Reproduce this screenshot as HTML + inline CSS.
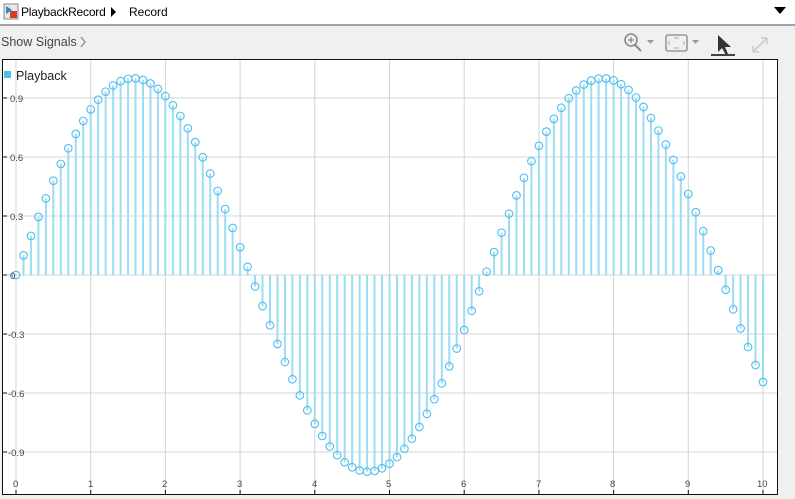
<!DOCTYPE html>
<html><head><meta charset="utf-8"><style>
body{margin:0;width:795px;height:499px;background:#f0f0f0;font-family:"Liberation Sans",sans-serif;position:relative;overflow:hidden}
.top{position:absolute;left:0;top:0;width:795px;height:24px;background:#fff;border-bottom:2px solid #a0a0a8}
.t{position:absolute;font-size:12px;color:#000}
.sv{position:absolute;left:0;top:0}
</style></head><body>
<div class="top"></div>
<svg class="sv" width="795" height="60">
<rect x="4" y="4" width="14" height="15" fill="#e8e8e8" stroke="#888"/>
<path d="M6 6 L12 10 L6 14Z" fill="#3a7fc0"/>
<rect x="10" y="11" width="7" height="7" fill="#d04020"/>
<path d="M111 7 L116 12 L111 17Z" fill="#000"/>
<path d="M774 7 L786 7 L780 14Z" fill="#000"/>
<path d="M81 37 L85 42 L81 47" stroke="#999" stroke-width="1.5" fill="none"/>
<circle cx="631" cy="40" r="6" stroke="#888" stroke-width="1.6" fill="none"/>
<path d="M635 45 L641 51" stroke="#888" stroke-width="2"/>
<path d="M628 40 H634 M631 37 V43" stroke="#888" stroke-width="1.3"/>
<path d="M647 40 H654 L650.5 44Z" fill="#999"/>
<rect x="666" y="35" width="21" height="16" rx="2" stroke="#999" stroke-width="1.6" fill="none"/>
<path d="M674 38 H679 M674 48 H679 M669 41 V45 M684 41 V45" stroke="#aaa" stroke-width="1"/>
<path d="M692 40 H699 L695.5 44Z" fill="#999"/>
<path d="M718 35 L718 52 L722 48 L726 55 L728 54 L725 47 L731 47Z" fill="#333"/>
<rect x="711" y="54" width="24" height="2" fill="#444"/>
<path d="M753 52 L767 38 M753 52 V46 M753 52 H759 M767 38 V44 M767 38 H761" stroke="#ccc" stroke-width="1.6" fill="none"/>
</svg>
<div class="t" style="left:21px;top:5px;letter-spacing:-0.2px">PlaybackRecord</div>
<div class="t" style="left:129px;top:5px">Record</div>
<div class="t" style="left:1px;top:35px;color:#444;font-size:12.5px">Show Signals</div>
<svg class="sv" width="795" height="499" style="pointer-events:none">
<rect x="2.5" y="59.5" width="775" height="435" fill="#fff" stroke="#111"/>
<g id="grid" stroke="#d4d4d4" stroke-width="1"></g>
<g id="stems" stroke="#9cdcf5" stroke-width="2"></g>
<g id="circ" stroke="#4dbeee" stroke-width="1.1" fill="none"></g>
<g font-size="9.5" fill="#444" font-family="Liberation Sans,sans-serif">
<text x="10" y="102">0.9</text><text x="10" y="161">0.6</text><text x="10" y="220">0.3</text><text x="10" y="279">0</text>
<text x="8" y="338">-0.3</text><text x="8" y="397">-0.6</text><text x="8" y="456">-0.9</text>
<text x="13" y="487">0</text><text x="88" y="487">1</text><text x="162" y="487">2</text><text x="237" y="487">3</text><text x="312" y="487">4</text><text x="386" y="487">5</text><text x="461" y="487">6</text><text x="536" y="487">7</text><text x="610" y="487">8</text><text x="685" y="487">9</text><text x="757" y="487">10</text>
</g>
<rect x="4" y="71" width="7" height="7" fill="#4dbeee"/>
<text x="16" y="80" font-size="12.5" fill="#222" font-family="Liberation Sans,sans-serif">Playback</text>
</svg>
<script>
var ns="http://www.w3.org/2000/svg";
function el(p,t,a){var e=document.createElementNS(ns,t);for(var k in a)e.setAttribute(k,a[k]);document.getElementById(p).appendChild(e);}
for(var i=0;i<=10;i++){var x=16+i*74.7;el("grid","line",{x1:x,y1:60,x2:x,y2:494});el("grid","line",{x1:x,y1:494,x2:x,y2:490,stroke:"#111"});}
[-0.9,-0.6,-0.3,0,0.3,0.6,0.9].forEach(function(v){var y=275-v*196.7;el("grid","line",{x1:3,y1:y,x2:777,y2:y});el("grid","line",{x1:3,y1:y,x2:7,y2:y,stroke:"#111"});});
for(var i=0;i<=100;i++){var t=i/10,x=16+t*74.7,y=275-Math.sin(t)*196.7;el("stems","line",{x1:x,y1:275,x2:x,y2:y});el("circ","circle",{cx:x,cy:y,r:3.8});}
</script>
</body></html>
